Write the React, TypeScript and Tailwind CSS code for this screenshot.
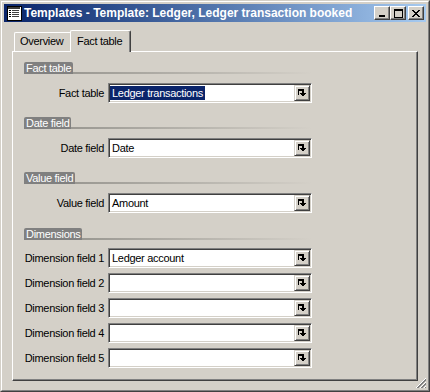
import React from "react";

const Arrow = () => (
  <svg width="8" height="8" viewBox="0 0 8 8" shapeRendering="crispEdges">
    <rect x="0" y="0" width="6" height="2" fill="#000" />
    <rect x="0" y="0" width="1" height="6" fill="#000" />
    <rect x="4" y="2" width="2" height="2" fill="#000" />
    <rect x="2" y="4" width="6" height="1" fill="#000" />
    <rect x="3" y="5" width="4" height="1" fill="#000" />
    <rect x="4" y="6" width="2" height="1" fill="#000" />
  </svg>
);

const Field = ({ value, selected }: { value?: string; selected?: boolean }) => (
  <div className="ml-[4px] w-[204px] h-[20px] bg-white flex items-center border border-t-[#808080] border-l-[#808080] border-r-white border-b-white shadow-[inset_1px_1px_0_#404040,inset_-1px_-1px_0_#D4D0C8] p-[1px]">
    <div className="flex-1 h-full flex items-center overflow-hidden whitespace-nowrap">
      {value ? (
        selected ? (
          <span className="bg-[#0A246A] text-white px-[2px] leading-[14px]">{value}</span>
        ) : (
          <span className="px-[2px] leading-[14px]">{value}</span>
        )
      ) : null}
    </div>
    <div className="w-[16px] h-[16px] bg-[#D4D0C8] flex items-center justify-center border border-t-[#D4D0C8] border-l-[#D4D0C8] border-r-[#404040] border-b-[#404040] shadow-[inset_1px_1px_0_#FFFFFF,inset_-1px_-1px_0_#808080]">
      <Arrow />
    </div>
  </div>
);

const Row = ({ label, value, selected, className }: { label: string; value?: string; selected?: boolean; className?: string }) => (
  <div className={"flex items-center h-[20px] " + (className ?? "")}>
    <div className="w-[80px] text-right whitespace-nowrap">{label}</div>
    <Field value={value} selected={selected} />
  </div>
);

const Header = ({ title, className }: { title: string; className?: string }) => (
  <div className={"flex items-end h-[12px] w-[288px] " + (className ?? "")}>
    <div className="bg-[#808080] text-white h-[12px] leading-[12px] px-[2px] rounded-t-[2px] whitespace-nowrap">{title}</div>
    <div className="flex-1 h-[2px] bg-gradient-to-r from-[#9A9892] to-[#D4D0C8]" />
  </div>
);

const CapBtn = ({ children, className }: { children: React.ReactNode; className?: string }) => (
  <div className={"w-[16px] h-[14px] bg-[#D4D0C8] flex items-center justify-center border border-t-white border-l-white border-r-[#404040] border-b-[#404040] shadow-[inset_-1px_-1px_0_#808080] " + (className ?? "")}>
    {children}
  </div>
);

export default function App() {
  return (
    <div className="w-[430px] h-[392px] bg-[#D4D0C8] border border-t-[#D4D0C8] border-l-[#D4D0C8] border-r-[#404040] border-b-[#404040] text-[11px] text-black relative" style={{ fontFamily: '"Liberation Sans", Arial, sans-serif' }}>
      <div className="h-full border border-t-white border-l-white border-r-[#808080] border-b-[#808080] p-[2px] flex flex-col">
        {/* title bar */}
        <div className="h-[18px] bg-gradient-to-r from-[#0A246A] to-[#A6CAF0] flex items-center">
          <svg className="ml-[2px]" width="16" height="16" viewBox="0 0 16 16" shapeRendering="crispEdges">
            <rect x="1" y="1" width="14" height="14" fill="#FFFFFF" stroke="#000" strokeWidth="1" />
            <rect x="2" y="2" width="12" height="2" fill="#3A3A3A" />
            <rect x="3" y="5" width="2" height="1" fill="#000" />
            <rect x="6" y="5" width="7" height="1" fill="#404040" />
            <rect x="3" y="7" width="2" height="1" fill="#000" />
            <rect x="6" y="7" width="7" height="1" fill="#404040" />
            <rect x="3" y="9" width="2" height="1" fill="#000" />
            <rect x="6" y="9" width="7" height="1" fill="#404040" />
            <rect x="3" y="11" width="2" height="1" fill="#000" />
            <rect x="6" y="11" width="7" height="1" fill="#404040" />
          </svg>
          <div className="ml-[2px] text-white font-bold text-[12px] whitespace-nowrap flex-1 leading-[18px]">
            Templates - Template: Ledger, Ledger transaction booked
          </div>
          <CapBtn>
            <svg width="8" height="8" viewBox="0 0 8 8" shapeRendering="crispEdges">
              <rect x="1" y="6" width="6" height="2" fill="#000" />
            </svg>
          </CapBtn>
          <CapBtn>
            <svg width="9" height="9" viewBox="0 0 9 9" shapeRendering="crispEdges">
              <rect x="0.5" y="0.5" width="8" height="8" fill="none" stroke="#000" />
              <rect x="0" y="0" width="9" height="2" fill="#000" />
            </svg>
          </CapBtn>
          <CapBtn className="ml-[2px] mr-[2px]">
            <svg width="8" height="7" viewBox="0 0 8 7" shapeRendering="crispEdges">
              <path d="M0 0h2v1h-2zM6 0h2v1h-2zM1 1h2v1h-2zM5 1h2v1h-2zM2 2h4v1h-4zM3 3h2v1h-2zM2 4h4v1h-4zM1 5h2v1h-2zM5 5h2v1h-2zM0 6h2v1h-2zM6 6h2v1h-2z" fill="#000" />
            </svg>
          </CapBtn>
        </div>

        {/* client */}
        <div className="flex-1 flex flex-col pt-[8px] tracking-[-0.3px]">
          <div className="flex items-end h-[21px] pl-[10px] relative z-10">
            <div className="w-[56px] h-[19px] border-t border-l border-t-white border-l-white rounded-tl-[2px] pl-[5px] leading-[17px]">
              Overview
            </div>
            <div className="w-[61px] h-[22px] -mb-[1px] bg-[#D4D0C8] border-t border-l border-r border-t-white border-l-white border-r-[#404040] shadow-[inset_-1px_0_0_#808080] rounded-t-[2px] pl-[6px] leading-[20px]">
              Fact table
            </div>
          </div>
          <div className="mx-[8px] h-[330px] border border-t-white border-l-white border-r-[#404040] border-b-[#404040] shadow-[inset_-1px_-1px_0_#808080] pl-[11px] pt-[10px]">
            <Header title="Fact table" />
            <Row className="mt-[9px]" label="Fact table" value="Ledger transactions" selected />
            <Header className="mt-[14px]" title="Date field" />
            <Row className="mt-[9px]" label="Date field" value="Date" />
            <Header className="mt-[14px]" title="Value field" />
            <Row className="mt-[9px]" label="Value field" value="Amount" />
            <Header className="mt-[15px]" title="Dimensions" />
            <Row className="mt-[8px]" label="Dimension field 1" value="Ledger account" />
            <Row className="mt-[5px]" label="Dimension field 2" />
            <Row className="mt-[5px]" label="Dimension field 3" />
            <Row className="mt-[5px]" label="Dimension field 4" />
            <Row className="mt-[5px]" label="Dimension field 5" />
          </div>
        </div>
      </div>
      {/* size grip */}
      <svg className="absolute right-[2px] bottom-[2px]" width="12" height="12" viewBox="0 0 12 12" shapeRendering="crispEdges">
        <path d="M11 1 L1 11" stroke="#FFFFFF" />
        <path d="M11 2 L2 11" stroke="#808080" />
        <path d="M11 3 L3 11" stroke="#808080" />
        <path d="M11 5 L5 11" stroke="#FFFFFF" />
        <path d="M11 6 L6 11" stroke="#808080" />
        <path d="M11 7 L7 11" stroke="#808080" />
        <path d="M11 9 L9 11" stroke="#FFFFFF" />
        <path d="M11 10 L10 11" stroke="#808080" />
      </svg>
    </div>
  );
}
